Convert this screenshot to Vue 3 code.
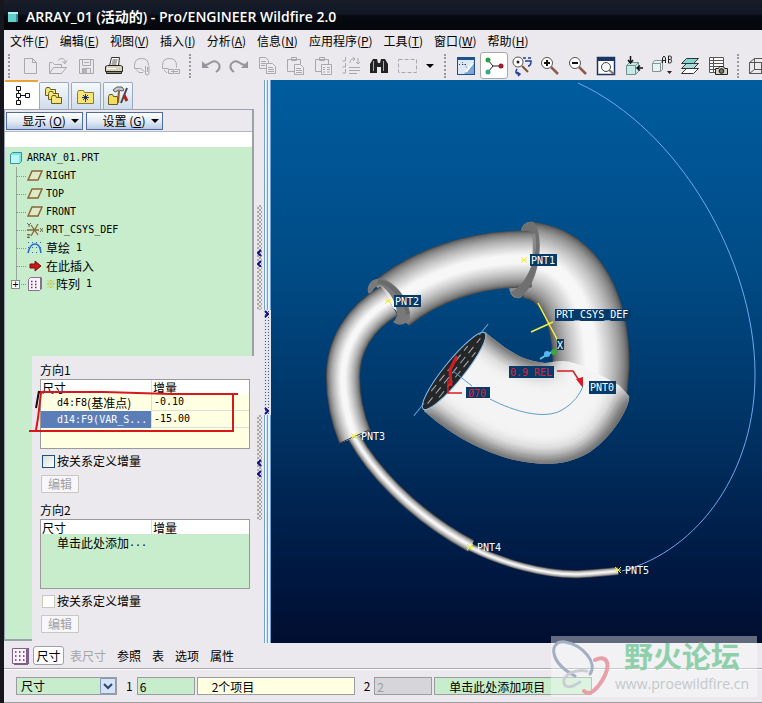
<script setup>
import { ref } from 'vue'

const menus = [
  { label: '文件', key: 'F' },
  { label: '编辑', key: 'E' },
  { label: '视图', key: 'V' },
  { label: '插入', key: 'I' },
  { label: '分析', key: 'A' },
  { label: '信息', key: 'N' },
  { label: '应用程序', key: 'P' },
  { label: '工具', key: 'T' },
  { label: '窗口', key: 'W' },
  { label: '帮助', key: 'H' }
]

// toolbar glyphs, all on a 22x22 grid
const g = 'fill="none" stroke="#a9a8ac"'
const icons = {
  new: `<path ${g} d="M5.500 3.500h8l4 4v11h-12zM13.500 3.500v4h4"/>`,
  open: `<path ${g} d="M2.500 18.500v-11h3l2 2h7v3M2.500 18.500l4-6h13l-5 6zM11 5.500q4-4 7 0v3M15.500 6.500l2.500 2 2-3"/>`,
  save: `<path ${g} d="M4.500 4.500h14v14h-14zM7.500 4.500v6h8v-6M7.500 18.500v-5h8v5M9 7.500h5"/><path fill="#b4b3b7" d="M8 14h4v4H8z"/>`,
  print: '<path fill="#fff" stroke="#333" d="M6.500 11l2-8.500h8l-1 8.500"/><path stroke="#555" d="M9.500 5h5M9 7h5M8.500 9h5"/><path fill="#d8d5bb" stroke="#222" d="M2.500 11.500l2-1h13l2 1v5h-17z"/><path fill="#8d8b7c" stroke="#222" d="M3.500 16.500h15v2h-15z"/><path stroke="#fff" d="M4 13.500h9"/>',
  mail: `<path ${g} d="M3.500 13.500v-3q0-7 7-7t7 7M3.500 13.500h6l4 3M14.500 11v7q0 2 1.500 2t2-2v-7M16.500 12v5M5 14.500l3 3h4"/>`,
  link: `<path ${g} d="M3.500 13.500v-3q0-7 7-7t7 7v2M3.500 13.500h6M9.500 14.500h5v4h-5zM12 16.500h7M15.500 14.500h5v4h-5M5 15l3 3"/>`,
  undo: '<path fill="none" stroke="#96959b" stroke-width="2" d="M4 10q4 0 6-2 5-4 9 1 2 5-3 8"/><path fill="#96959b" d="M2 6v7h7z"/>',
  redo: '<path fill="none" stroke="#96959b" stroke-width="2" d="M18 10q-4 0-6-2-5-4-9 1-2 5 3 8"/><path fill="#96959b" d="M20 6v7h-7z"/>',
  copy: `<path ${g} d="M3.500 2.500h6l3 3v8h-9zM5 6.500h5M5 8.500h5M5 10.500h4"/><path fill="#eeecf0" stroke="#a9a8ac" d="M10.500 8.500h6l3 3v7h-9zM12 12.500h5M12 14.500h6M12 16.500h6"/>`,
  paste: `<path ${g} d="M3.500 4.500h13v12h-13zM7.500 2.500h5v3h-5z"/><path fill="#eeecf0" stroke="#a9a8ac" d="M10.500 9.500h6l3 3v7h-9zM12 13.500h5M12 15.500h6M12 17.500h6"/>`,
  special: `<path ${g} d="M3.500 4.500h13v12h-13zM7.500 2.500h5v3h-5z"/><path fill="#eeecf0" stroke="#a9a8ac" d="M9.500 9.500h10v10h-10zM11 12.500h2M15 12.500h3M11 14.500h2M15 14.500h3M11 17h2M15 17h3"/>`,
  regen: `<path ${g} d="M5.500 2v4h-3M5.500 8v4h-3M5.500 14v4h-3M9 12.500h11M9 15.500h11M9 18.500h8M10 8q0-5 5-4M13 2l2 2-2 2M18 3v6M16 7l2 2 2-2"/>`,
  find: '<path fill="#222" d="M2 9l3-5h4l1 4h2l1-4h4l3 5v9h-7v-6h-4v6H2z"/><path stroke="#aaa" d="M5.500 6v10M15.500 6v10"/>',
  select: '<path fill="none" stroke="#a9a8ac" stroke-dasharray="4 2" d="M2.500 4.500h18v13h-18z"/>',
  datum: '<rect x="2" y="2" width="18" height="18" fill="#20508a"/><path fill="#dceaf8" d="M3 5h16v14H3z"/><path fill="#79a5d8" d="M19 7v12H9z"/><path stroke="#334" stroke-dasharray="1 2" d="M4 9.500h8M7 7l6 7"/><path stroke="#fff" stroke-width="2" d="M18 8l-7 9"/>',
  csys: '<path fill="none" stroke="#222" d="M5 5l5 6M10 11H19M10 11l-5 6"/><circle cx="5" cy="5" r="2.500" fill="#27a044"/><circle cx="5" cy="17" r="2.500" fill="#35a889"/><circle cx="18" cy="11" r="2.500" fill="#a3172c"/>',
  spin: '<circle cx="7" cy="7" r="5" fill="#fff" stroke="#555"/><path stroke="#7a5138" stroke-width="2" d="M11 11l6 6"/><circle cx="7" cy="7" r="1.500" fill="#222"/><path fill="none" stroke="#1f3f9c" stroke-width="1.500" d="M12 3h3M17 3h3M14 6h6q0 5-3 5M6 14q-3 5 2 5M6 17l3 2-2 2"/>',
  zin: '<circle cx="8" cy="8" r="5.500" fill="#fff" stroke="#555"/><path stroke="#111" stroke-width="2" d="M5 8h6M8 5v6"/><path stroke="#8a5c50" stroke-width="2.500" d="M12 12l7 7"/>',
  zout: '<circle cx="8" cy="8" r="5.500" fill="#fff" stroke="#555"/><path stroke="#111" stroke-width="2" d="M5 8h6"/><path stroke="#8a5c50" stroke-width="2.500" d="M12 12l7 7"/>',
  fit: '<path fill="#fff" stroke="#1d3466" stroke-width="1.500" d="M2.500 2.500h17v17h-17z"/><path fill="#1d3466" d="M2 2h18v4H2z"/><circle cx="11" cy="12" r="4.500" fill="#f4f8fc" stroke="#444"/><path stroke="#8a6a60" stroke-width="2" d="M14 15l5 4"/>',
  orient: '<path fill="#c8e9e6" stroke="#6f8f90" d="M3.500 10.500l3-3h9v9l-3 3h-9zM3.500 10.500h9v9M12.500 10.500l3-3"/><path stroke="#111" stroke-width="1.500" d="M7.500 1v7M5 5l2.500 3L10 5M20 13h-6M17 10.500L14 13l3 2.500" fill="none"/>',
  views: '<path fill="#e6f3f3" stroke="#879495" d="M1.500 8.500l2-3h8v9l-2 2h-8zM1.500 8.500h8v8M9.500 8.500l2-3"/><path fill="none" stroke="#222" d="M11.500 8V3l1.500-2 1.500 2v5M11.500 5.500h3M17.500 1v7h2q2-1 .5-3.500Q21 1 19.500 1zM17.500 4.500h2"/><path fill="#222" d="M16 16h5l-2.500 3z"/>',
  layers: '<path fill="#fff" stroke="#333" d="M2.500 18.500l5-5h12l-5 5z"/><path fill="#a9dcd8" stroke="#333" d="M2.500 13.500l5-5h12l-5 5z"/><path fill="#7fd6d2" stroke="#333" d="M2.500 8.500l5-5h12l-5 5z"/>',
  camera: '<path fill="#fff" stroke="#555" d="M2.500 2.500h14v15h-14zM2.500 5.500h14M2.500 8.500h14M2.500 11.500h14M2.500 14.500h14M6.500 2.500v15"/><path fill="#d8d0bc" stroke="#222" d="M8.500 13.500h3l1-2h4l1 2h3v6h-12z"/><circle cx="14.500" cy="16" r="2.300" fill="#777" stroke="#111"/>',
  wire: '<path fill="none" stroke="#555" d="M1.500 7.500l5-4h12v11l-5 4h-12zM1.500 7.500h12v11M13.500 7.500l5-4M6.500 3.500v11h12M6.500 14.500l-5 4"/>'
}
const toolGroups = [
  ['new', 'open', 'save', 'print', 'mail', 'link'],
  ['undo', 'redo', 'copy', 'paste', 'special', 'regen', 'find', 'select', 'more'],
  ['datum', 'csys', 'spin', 'zin', 'zout', 'fit', 'orient', 'views', 'layers', 'camera'],
  ['wire']
]

const folder = (x, y) => `<path fill="#f5e67c" stroke="#6b5a1c" d="M${x}.500 ${y + 2}.500l1-2h3l1 2h5v6h-10z"/>`
const sideTabs = [
  '<path fill="#fff" stroke="#111" d="M5.500 1.500h4v4h-4zM5.500 8.500h4v4h-4zM5.500 15.500h4v4h-4zM14.500 8.500h4v4h-4zM7.500 5.500v3M7.500 12.500v3M9.500 10.500h5"/>',
  folder(2, 2) + folder(5, 6) + folder(8, 10),
  '<path fill="#f7e675" stroke="#8b7a34" d="M2.500 7.500l1-2h5l1 2h9v11h-16z"/><path stroke="#1b2e66" d="M10.500 9v8M7 12.500h7M8 10l5 5M13 10l-5 5"/>',
  '<path fill="#f3dc62" stroke="#6b5a1c" d="M1.500 11.500l1-2h3l1 2h4v8h-9z"/><path fill="#c8ccd0" stroke="#555" d="M6 5l4-3h5l2 3-2 1-3-1-4 2z"/><path stroke="#8b5e31" stroke-width="2" d="M12 6l-1 12"/><path stroke="#444" stroke-width="2" d="M20 3l-6 15"/><path stroke="#b02020" stroke-width="3" d="M17 10l3 6"/>'
]

const plane = '<path fill="#dfe9c6" stroke="#8a6536" stroke-width="1.500" d="M5 3h10l-4 9H1z"/>'
const tree = [
  { name: 'RIGHT', icon: plane },
  { name: 'TOP', icon: plane },
  { name: 'FRONT', icon: plane },
  { name: 'PRT_CSYS_DEF', icon: '<path stroke="#8a6536" stroke-width="1.300" d="M0 8h12M4 3l7 10M11 2L4 14"/><path fill="none" stroke="#6d6a4c" d="M0 1l2 2 2-2M2 3v2M13 6l3 4M16 6l-3 4M0 12.500h3l-3 3h3"/>' },
  { name: '草绘', no: '1', icon: '<path fill="none" stroke="#2a6ccc" stroke-width="1.500" d="M1 13Q3 4 8 4t6 9"/><path stroke="#2a6ccc" stroke-dasharray="1 3" d="M1 2.500h14M1 7.500h14M1 12.500h14"/>' },
  { name: '在此插入', icon: '<path fill="#c81818" stroke="#7a0d0d" d="M3 6h5V3l6 5-6 5v-3H3z"/>' },
  { name: '阵列', no: '1', star: true, icon: '<path fill="#fbf3fb" stroke="#8a7090" d="M1.500 3.500l2-2h11v11l-2 2h-11z"/><path stroke="#8a7090" stroke-width="2" d="M14 2v11"/><path stroke="#603070" stroke-width="1.500" stroke-dasharray="1.500 2.500" d="M4 5.500h8M4 8.500h8M4 11.500h8"/>' }
]

const dims = [
  { name: 'd4:F8', ref: '(基准点)', inc: '-0.10' },
  { name: 'd14:F9(VAR_S...', ref: '', inc: '-15.00' }
]
const picked = ref(1)
const byRelation1 = ref(false)
const byRelation2 = ref(false)

const dashTabs = ['尺寸', '表尺寸', '参照', '表', '选项', '属性']
const activeDash = ref('尺寸')
const count1 = ref('6')
const count2 = ref('2')

// round shading: a stack of strokes going from the dark rim to the bright core
function shade(width) {
  const n = Math.max(6, Math.round(width / 2))
  return Array.from({ length: n }, (_, i) => {
    const t = i / (n - 1)
    const v = Math.round(75 + 172 * Math.pow(t, 0.6))
    return { w: width * (1 - t * 0.85), c: `rgb(${v},${v},${v})` }
  })
}
const tubes = {
  t1: { d: 'M527 260C572 264 591 312 591 365L588 402', s: shade(77) },
  t2: { d: 'M391 304C425 276 474 258 532 259', s: shade(57) },
  t3: { d: 'M389 301C360 318 343 345 343 377C343 400 348 420 355 437', s: shade(34) },
  t4: { d: 'M354 437C370 466 408 512 471 546', s: shade(13) },
  t5: { d: 'M470 547C500 562 545 576 582 574C598 573 608 572 618 571', s: shade(8) }
}
const points = [
  { n: 'PNT1', x: 524, y: 260, tx: 531 },
  { n: 'PNT2', x: 388, y: 301, tx: 395 },
  { n: 'PNT3', x: 354, y: 436, tx: 361 },
  { n: 'PNT4', x: 470, y: 547, tx: 477 },
  { n: 'PNT5', x: 618, y: 570, tx: 625 }
]
</script>

<template>
  <div class="window">
    <header class="titlebar">
      <svg width="12" height="12" viewBox="0 0 12 12"><path fill="#5fd0cc" d="M1 1h10v10H1z" /><path fill="#b5f1ec" d="M1 1h10v2H1z" /><path fill="#2c8f92" d="M9 3h2v8H9z" /></svg>
      <h1>ARRAY_01 (活动的) - Pro/ENGINEER Wildfire 2.0</h1>
    </header>

    <nav class="menubar">
      <a v-for="m in menus" :key="m.key" href="#">{{ m.label }}(<u>{{ m.key }}</u>)</a>
    </nav>

    <div class="toolbar">
      <div v-for="(group, i) in toolGroups" :key="i" class="group">
        <button v-for="t in group" :key="t" type="button" :class="{ on: t === 'csys', more: t === 'more' }" :aria-label="t">
          <svg v-if="t !== 'more'" width="22" height="22" viewBox="0 0 22 22" v-html="icons[t]"></svg>
          <svg v-else width="8" height="4" viewBox="0 0 8 4"><path d="M0 0h8L4 4z" /></svg>
        </button>
      </div>
    </div>

    <main>
      <aside class="side">
        <div class="tabs">
          <button v-for="(tab, i) in sideTabs" :key="i" type="button" :class="{ active: i === 0 }" :aria-label="'navigator ' + i">
            <svg width="22" height="22" viewBox="0 0 22 22" v-html="tab"></svg>
          </button>
        </div>
        <div class="browser">
          <div class="tree-menu">
            <button type="button">显示 (<u>O</u>)<i></i></button>
            <button type="button">设置 (<u>G</u>)<i></i></button>
          </div>
          <div class="blank"></div>
          <div class="tree">
            <div class="root">
              <svg width="14" height="14" viewBox="0 0 14 14"><path fill="#7be6e8" stroke="#3c8f94" d="M1.500 3.500l2-2h9v9l-2 2h-9z" /><path fill="#b9f6f6" d="M2 4h8v8H2z" /></svg>
              <span class="latin">ARRAY_01.PRT</span>
            </div>
            <ul>
              <li v-for="node in tree" :key="node.name">
                <b v-if="node.star" class="plus">+</b>
                <svg width="16" height="16" viewBox="0 0 16 16" v-html="node.icon"></svg>
                <em v-if="node.star">※</em>
                <span :class="{ latin: /^[A-Z]/.test(node.name) }">{{ node.name }}</span>
                <span v-if="node.no" class="latin no">{{ node.no }}</span>
              </li>
            </ul>
          </div>
        </div>
        <div class="lower">
          <div class="strip"></div>
          <section class="dims">
            <h2>方向1</h2>
            <div class="grid yellow">
              <table>
                <thead><tr><th>尺寸</th><th>增量</th></tr></thead>
                <tbody>
                  <tr v-for="(d, i) in dims" :key="d.name" :class="{ picked: picked === i }" @click="picked = i">
                    <td><span class="latin">{{ d.name }}</span>{{ d.ref }}</td>
                    <td><span class="latin">{{ d.inc }}</span></td>
                  </tr>
                </tbody>
              </table>
              <svg class="markup" width="212" height="74" viewBox="28 388 212 74">
                <path fill="none" stroke="#d81818" stroke-width="2" d="M39 392L104 392L171 394L238 394M233 394V431H29M41 393L38 418L36 430" />
                <path fill="none" stroke="#111" stroke-width="2" d="M39 391L36 408" />
              </svg>
            </div>
            <label><input v-model="byRelation1" type="checkbox" />按关系定义增量</label>
            <button type="button" disabled>编辑</button>
            <h2>方向2</h2>
            <div class="grid green">
              <table>
                <thead><tr><th>尺寸</th><th>增量</th></tr></thead>
                <tbody><tr><td colspan="2">单击此处添加<span class="latin">...</span></td></tr></tbody>
              </table>
            </div>
            <label class="off"><input v-model="byRelation2" type="checkbox" disabled />按关系定义增量</label>
            <button type="button" disabled>编辑</button>
          </section>
        </div>
      </aside>

      <div class="sash">
        <div v-for="n in 2" :key="n" class="grip">
          <svg width="5" height="18" viewBox="0 0 5 18"><path d="M4 1L1 4l3 3M4 12l-3 3 3 3" /></svg>
        </div>
      </div>
      <div class="rail">
        <div class="dots">
          <svg width="5" height="8" viewBox="0 0 5 8"><path d="M1 1l3 3-3 3" /></svg>
          <svg width="5" height="8" viewBox="0 0 5 8"><path d="M1 1l3 3-3 3" /></svg>
        </div>
      </div>

      <div class="viewport">
        <svg viewBox="271 80 491 563" preserveAspectRatio="xMidYMid slice">
          <defs>
            <filter id="soft" x="-20%" y="-20%" width="140%" height="140%"><feGaussianBlur stdDeviation="10" /></filter>
            <clipPath id="bell"><path d="M485 332C505 348 520 361 545 363C556 362 562 358 580 365C596 371 608 380 619 385L629 396C631 404 615 435 590 452C565 467 540 466 510 459C475 449 445 430 424 411Z" /></clipPath>
          </defs>
          <path fill="none" stroke="#6fa8f0" d="M578 83C680 130 754 260 755 372C756 470 700 550 622 571" />

          <path v-for="(s, i) in tubes.t5.s" :key="'e' + i" fill="none" :d="tubes.t5.d" :stroke="s.c" :stroke-width="s.w" />
          <path v-for="(s, i) in tubes.t4.s" :key="'d' + i" fill="none" :d="tubes.t4.d" :stroke="s.c" :stroke-width="s.w" />
          <path v-for="(s, i) in tubes.t1.s" :key="'a' + i" fill="none" :d="tubes.t1.d" :stroke="s.c" :stroke-width="s.w" />
          <path fill="#8a8a8a" d="M521 231C522 224 528 221 533 222C545 235 540 285 520 298C514 299 510 296 509 287Z" />
          <path v-for="(s, i) in tubes.t2.s" :key="'b' + i" fill="none" :d="tubes.t2.d" :stroke="s.c" :stroke-width="s.w" />
          <path fill="#707070" d="M533 222C544 230 542 276 522 297C518 299 514 298 511 292C528 285 540 250 535 234Q528 229 521 231Q524 221 533 222Z" />
          <path fill="#797979" d="M368 293C366 282 375 277 384 279C397 284 411 302 410 318C406 326 398 326 393 322C403 315 392 291 380 285Q374 286 371 294Z" />
          <path v-for="(s, i) in tubes.t3.s" :key="'c' + i" fill="none" :d="tubes.t3.d" :stroke="s.c" :stroke-width="s.w" />
          <path fill="none" stroke="#6a6a6a" stroke-width="4" d="M378 281C394 284 405 299 408 314" />
          <path stroke="#333" d="M340 443L369 430" />

          <g clip-path="url(#bell)">
            <path fill="#f4f4f4" d="M400 320h240v160H400z" />
            <path fill="none" stroke="#2c2c2c" stroke-width="20" filter="url(#soft)" d="M481 322C504 340 520 357 552 360M633 392C635 404 617 437 594 456C567 473 540 472 510 465C475 455 445 436 416 411" />
          </g>

          <!-- open end of the shell -->
          <g transform="rotate(-51 454 371)">
            <ellipse cx="454" cy="371" rx="49" ry="10" fill="#242628" stroke="#8ac2ec" />
            <path stroke="#a9afb4" stroke-dasharray="8 5" d="M412 371h84M424 366h58M424 376h58" />
            <path stroke="#6da7dc" d="M394 368h16M498 368h14" />
          </g>
          <path fill="none" stroke="#d81c24" stroke-width="3" d="M457 356L450 370L451 386" />
          <path fill="none" stroke="#d81c24" stroke-width="1.500" d="M448 380V393H462M557 371H573L582 385" />
          <path fill="#d81c24" d="M576 379L583 388L583 377Z" />
          <path fill="none" stroke="#5a9fc4" d="M453 371L472 386M490 399C515 412 545 420 562 410C574 403 580 394 583 386" />

          <path stroke="#eef04a" stroke-width="1.500" d="M538 303L559 343M531 332L553 322" />
          <path stroke="#66bff5" stroke-width="2" d="M540 359L548 354L554 351" />
          <circle cx="547" cy="354" r="3" fill="#58b8f0" />
          <circle cx="554" cy="352" r="3" fill="#38a838" />

          <g class="tags">
            <g v-for="p in points" :key="p.n">
              <path stroke="#f2ee38" :d="`M${p.x - 3} ${p.y - 3}l6 6M${p.x + 3} ${p.y - 3}l-6 6M${p.x - 3} ${p.y}h6`" />
              <rect v-if="p.y < 400" :x="p.tx - 1" :y="p.y - 6" width="27" height="12" />
              <text :x="p.tx" :y="p.y + 4">{{ p.n }}</text>
            </g>
            <rect x="589" y="381" width="27" height="13" />
            <text x="590" y="391">PNT0</text>
            <rect x="555" y="309" width="76" height="12" />
            <text x="556" y="318">PRT_CSYS_DEF</text>
            <rect x="557" y="339" width="7" height="11" />
            <text x="557" y="349">X</text>
            <rect x="509" y="366" width="45" height="12" />
            <text class="red" x="510" y="376">0.9 REL</text>
            <rect x="466" y="387" width="24" height="11" />
            <text class="red" x="468" y="397">Ø70</text>
          </g>
        </svg>
      </div>
    </main>

    <footer class="dashboard">
      <div class="dash-tabs">
        <svg width="18" height="18" viewBox="0 0 18 18"><path fill="#fbf3fb" stroke="#806088" d="M.5 1.500h14v15H.5z" /><path stroke="#806088" stroke-width="2" d="M16 1v16M2 17h14" /><path stroke="#503060" stroke-width="1.500" stroke-dasharray="1.500 2.500" d="M3 5h10M3 9h10M3 13h10" /></svg>
        <button v-for="t in dashTabs" :key="t" type="button" :class="{ active: activeDash === t }" :disabled="t === '表尺寸'" @click="activeDash = t">{{ t }}</button>
      </div>
      <div class="fields">
        <div class="combo">
          <select aria-label="阵列类型"><option>尺寸</option></select>
          <svg width="16" height="16" viewBox="0 0 16 16"><path fill="#d5e3f4" stroke="#7f9cc0" d="M.5.5h15v15H.5z" /><path fill="none" stroke="#2c4674" stroke-width="2" d="M4 6l4 4 4-4" /></svg>
        </div>
        <label for="count1">1</label>
        <input id="count1" v-model="count1" class="count" />
        <input class="items yellow" value="2个项目" aria-label="第一方向" readonly />
        <label for="count2">2</label>
        <input id="count2" v-model="count2" class="count" disabled />
        <input class="items" value="单击此处添加项目" aria-label="第二方向" readonly />
      </div>
      <div class="watermark">
        <svg width="60" height="60" viewBox="0 0 60 60">
          <g fill="none" stroke-linecap="round">
            <path stroke="#a3afc4" stroke-width="3" d="M24 40C-3 26 -2 4 14 6C32 9 47 27 39 38" />
            <path stroke="#c9ced3" stroke-width="3" d="M36 35C26 33 15 37 13 44C12 52 19 53 29 46" />
            <path stroke="#e6a0a8" stroke-width="4" d="M44 24C57 18 60 29 52 43C45 55 38 60 33 55" />
          </g>
        </svg>
        <p><strong>野火论坛</strong><span>www.proewildfire.cn</span></p>
      </div>
    </footer>
  </div>
</template>

<style>
body { margin: 0; background: #ebe9ed; }
</style>

<style scoped>
.window {
  border-left: 4px solid #15171c;
  background: #ebe9ed;
  font: 12px/18px "Noto Sans CJK SC", sans-serif;
  color: #000;
  overflow: hidden;
}
.window * { box-sizing: border-box; }
svg { display: block; flex: none; }
button { font: inherit; color: inherit; padding: 0; border: 0; background: none; display: flex; align-items: center; justify-content: center; }
h1, h2, p, ul { margin: 0; padding: 0; }

.titlebar {
  height: 30px;
  margin-left: -4px;
  padding: 4px 0 0 7px;
  display: flex;
  align-items: center;
  gap: 7px;
  background: linear-gradient(#1a1d24 0, #161b29 4px, #121726 14px, #06090f 16px, #05070c);
}
h1 { font: 600 14px/20px "Open Sans", "Noto Sans CJK SC", sans-serif; color: #fff; white-space: nowrap; }

.menubar { height: 22px; padding-left: 6px; display: flex; align-items: center; gap: 11px; }
.menubar a { color: #000; text-decoration: none; white-space: nowrap; }

.toolbar { height: 28px; display: flex; overflow: hidden; }
.group { display: flex; flex: none; }
.group::before { content: ""; margin: 2px 6px 2px 5px; border-left: 2px dotted #98979d; }
.group:first-child::before { margin: 2px 6px 2px 4px; }
.group button { width: 28px; height: 27px; }
.group .on { background: #fff; border: 1px solid #a6a6ac; border-radius: 3px; }
.group .more { width: 18px; }

main { display: flex; }
.side { width: 258px; flex: none; }
.tabs { display: flex; gap: 2px; height: 29px; align-items: flex-end; }
.tabs button { width: 30px; height: 27px; border: 1px solid #9aabc0; border-bottom: 0; border-radius: 2px 2px 0 0; background: linear-gradient(#f6f9fd, #cfdcec); }
.tabs .active { width: 35px; height: 29px; margin-right: -2px; background: #fff; border-color: #fff; border-top: 2px solid #e8a33c; }

.browser { width: 250px; border: 1px solid #98a2b2; border-right: 2px solid #9aa3a8; border-bottom: 0; }
.tree-menu { display: flex; gap: 3px; padding: 2px 1px 1px; }
.tree-menu button { width: 77px; height: 18px; padding-left: 12px; border: 1px solid #4f6c9c; background: linear-gradient(#fff, #dde6f3 60%, #b7c9e3); white-space: nowrap; }
.tree-menu i { margin-left: 5px; border: 4px solid transparent; border-top-color: #000; border-bottom: 0; }
.blank { height: 16px; background: #fff; border-top: 1px solid #b0b8c4; }
.tree { height: 209px; padding-top: 2px; background: #c7edcc; }
.root { display: flex; align-items: center; gap: 4px; height: 18px; padding-left: 4px; }
.latin { font-family: "DejaVu Sans Mono", monospace; font-size: 10px; }
.tree ul { margin-left: 11px; list-style: none; background: linear-gradient(#9aa89c, #9aa89c) 0 0 / 1px 117px no-repeat; }
.tree li { position: relative; display: flex; align-items: center; height: 18px; padding-left: 11px; }
.tree li::before { content: ""; position: absolute; left: 0; top: 9px; width: 10px; border-top: 1px dotted #8a988c; }
.tree li svg { margin-right: 3px; }
.tree em { font-style: normal; font-size: 10px; color: #b5b800; }
.no { margin-left: 6px; }
.plus { position: absolute; left: -5px; top: 5px; width: 9px; height: 9px; border: 1px solid #888; background: #fff; font: 10px/7px "DejaVu Sans Mono", monospace; text-align: center; }

.lower { display: flex; }
.strip { width: 28px; margin-bottom: 2px; background: #c7edcc; border-left: 1px solid #98a2b2; border-bottom: 2px solid #9aa3a8; }
.dims { flex: 1; padding: 5px 12px 10px 8px; }
h2 { font: inherit; }
.grid { position: relative; height: 70px; border: 1px solid #9a9a9a; }
.yellow { background: #ffffe1; }
.green { background: #c7edcc; }
.grid table { width: 100%; border-collapse: separate; border-spacing: 0; table-layout: fixed; }
.grid th { height: 14px; padding: 0 1px; background: #fff; font-weight: normal; line-height: 13px; text-align: left; }
.grid th + th { border-left: 1px solid #ddd; }
.grid th:first-child { width: 110px; }
.grid td { height: 17px; padding: 0 0 0 16px; line-height: 16px; white-space: nowrap; }
.grid td .latin { line-height: 16px; vertical-align: top; }
.grid td + td { padding-left: 2px; border-left: 1px solid #ddd; border-bottom: 1px solid #ddd; }
.picked td:first-child { background: #5b7eb8; color: #fff; }
.markup { position: absolute; left: -13px; top: 8px; pointer-events: none; }
.dims label { display: flex; align-items: center; gap: 2px; height: 18px; margin: 3px 0 5px 2px; }
.dims input { appearance: none; width: 13px; height: 13px; margin: 0; border: 1px solid #1c5180; background: linear-gradient(135deg, #dcdcd7, #fff); }
.dims .off input { border-color: #cac8bb; background: #fff; }
.dims button { width: 38px; height: 18px; margin: 0 0 8px 1px; border: 1px solid #c9c7c0; border-radius: 1px; background: #f7f6f8; color: #a1a0a5; }
.dims button:last-child { margin-bottom: 0; }

.sash { width: 2px; display: flex; flex-direction: column; gap: 105px; padding-top: 125px; }
.grip { width: 5px; height: 105px; margin-left: -5px; padding-top: 44px; background: repeating-conic-gradient(#aaa8a8 0 25%, #e8e4e0 0 50%) 0 0 / 4px 4px; }
.grip path, .dots path { fill: none; stroke: #101080; stroke-width: 2; }
.rail { width: 7px; flex: none; padding-top: 230px; background: linear-gradient(90deg, #6d9fd4 1px, #fff 1px 2px, #d3e5f6 2px 3px, #6d9fd4 3px 4px, #e8f2fb 4px 6px, #6d9fd4 6px); }
.dots { height: 105px; width: 7px; background: radial-gradient(#555 1px, #dfe6f2 1px) 0 0 / 3px 3px; display: flex; flex-direction: column; justify-content: space-between; }

.viewport { flex: 1; position: relative; min-width: 0; background: linear-gradient(#005c9e, #004a84 35%, #003263 62%, #001a44 85%, #000e30); }
.viewport svg { position: absolute; width: 100%; height: 100%; }
.tags text { font: 10px "DejaVu Sans Mono", monospace; fill: #fff; }
.tags rect { fill: #063a68; }
.tags .red { fill: #e0203c; }

.dashboard { position: relative; height: 60px; border-bottom: 1px solid #9c9ba0; }
.dash-tabs { display: flex; align-items: center; height: 26px; padding-left: 8px; border-bottom: 1px solid #a9a8ad; }
.dash-tabs button { height: 19px; margin-right: 11px; }
.dash-tabs button:disabled { color: #a5a4a9; }
.dash-tabs .active { width: 31px; margin: 0 6px 0 3px; border: 1px solid #a0a0a4; border-radius: 3px; background: #fff; }
.fields { display: flex; align-items: center; gap: 2px; padding: 7px 170px 0 12px; border-top: 1px solid #fff; }
.fields label { padding: 0 2px 0 7px; }
.fields input, .fields select { height: 18px; margin: 0; padding: 0 2px; border: 1px solid #9b9ba0; border-radius: 0; background: #c7edcc; font: inherit; line-height: 16px; color: #000; min-width: 0; }
.fields .count { width: 58px; flex: none; }
.fields .count:disabled { background: #d6d5d9; color: #9e9da2; }
.fields .items { flex: 1 0 158px; max-width: 158px; padding-left: 14px; }
.fields .items.yellow { background: #ffffe1; }
.combo { position: relative; width: 101px; flex: none; }
.combo select { display: block; width: 100%; appearance: none; padding-left: 4px; }
.combo svg { position: absolute; right: 1px; top: 1px; pointer-events: none; }

.watermark { position: absolute; right: 5px; top: -7px; width: 206px; height: 61px; display: flex; background: rgba(255, 255, 255, 0.38); }
.watermark p { flex: 1; display: flex; flex-direction: column; text-align: center; margin-left: -4px; }
.watermark strong { font-size: 29px; line-height: 38px; color: #8fd0ab; font-weight: 700; }
.watermark span { font: 14px/20px "Open Sans", sans-serif; color: #c3c8cc; }
</style>
